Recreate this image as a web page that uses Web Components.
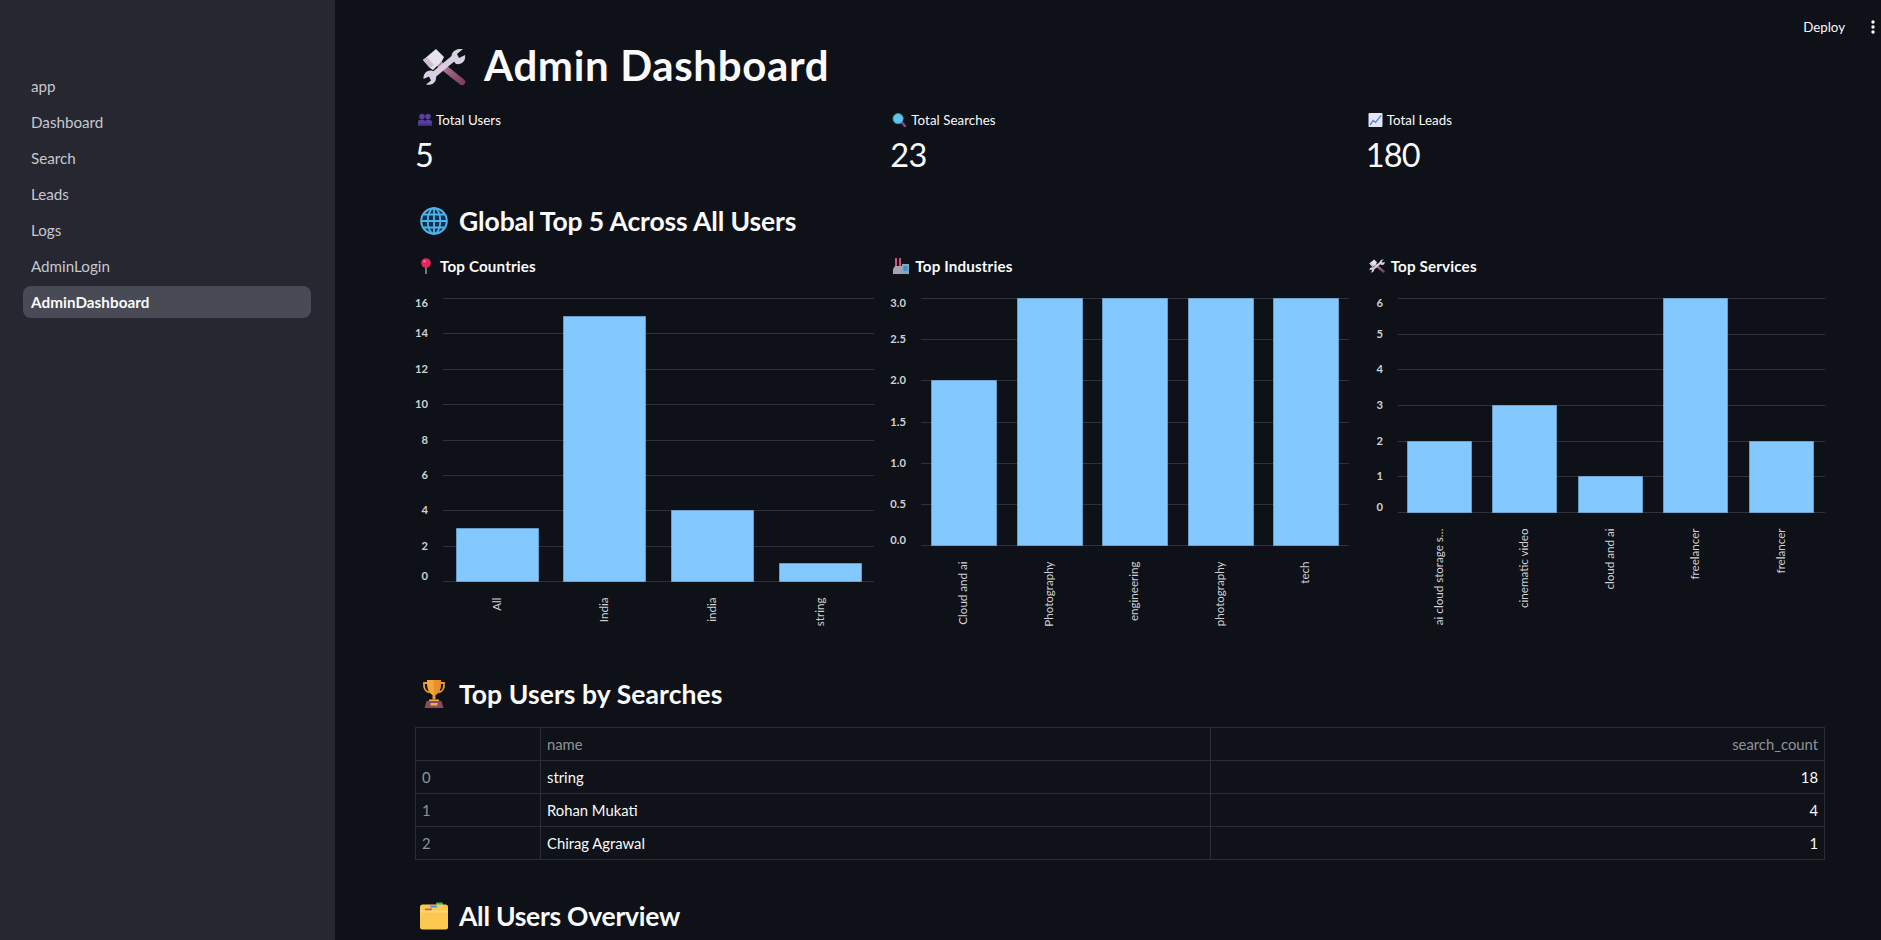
<!doctype html>
<html lang="en"><head><meta charset="utf-8"><title>Admin Dashboard</title>
<style>
html,body{margin:0;height:100%;background:#0e1117;color:#fafafa;font-family:Lato,"Noto Sans",sans-serif}
</style></head><body>
<admin-app>
  <side-nav slot="side">
    <nav-item>app</nav-item><nav-item>Dashboard</nav-item><nav-item>Search</nav-item><nav-item>Leads</nav-item><nav-item>Logs</nav-item><nav-item>AdminLogin</nav-item><nav-item active>AdminDashboard</nav-item>
  </side-nav>
  <top-bar slot="bar"></top-bar>
  <page-title icon="tools">Admin Dashboard</page-title>
  <metric-row>
    <metric-card icon="busts" iw="14" label="Total Users" value="5"></metric-card>
    <metric-card icon="glass" iw="15" label="Total Searches" value="23"></metric-card>
    <metric-card icon="trend" iw="15" label="Total Leads" value="180"></metric-card>
  </metric-row>
  <section-head icon="globe" style="margin-top:21px;letter-spacing:-.12px">Global Top 5 Across All Users</section-head>
  <metric-row style="margin-top:10px">
    <chart-card icon="pin" title="Top Countries" max="16" step="2" x0="28" x1="459" base="291.5"
      data='[["All",3],["India",15],["india",4],["string",1]]'></chart-card>
    <chart-card icon="factory" title="Top Industries" max="3" step="0.5" dec="1" x0="31" x1="458.7" base="255.5"
      data='[["Cloud and ai",2],["Photography",3],["engineering",3],["photography",3],["tech",3]]'></chart-card>
    <chart-card icon="tools" title="Top Services" max="6" step="1" x0="32" x1="459.3" base="222.5" nudge="-1"
      data='[["ai cloud storage s…",2],["cinematic video",3],["cloud and ai",1],["freelancer",6],["frelancer",2]]'></chart-card>
  </metric-row>
  <section-head icon="trophy" style="margin-top:34px;letter-spacing:.08px">Top Users by Searches</section-head>
  <data-table style="margin-top:13px"
    data='[["","name","search_count"],["0","string","18"],["1","Rohan Mukati","4"],["2","Chirag Agrawal","1"]]'></data-table>
  <section-head icon="folder" style="margin-top:36px;letter-spacing:-.27px">All Users Overview</section-head>
</admin-app>
<script>
const ICONS={
tools:`<svg viewBox="0 0 44 36"><defs><linearGradient id="hd" gradientUnits="userSpaceOnUse" x1="15" y1="13" x2="40" y2="33"><stop offset="0" stop-color="#b98ba2"/><stop offset="1" stop-color="#7d3f63"/></linearGradient></defs><path d="M15 13 40 33" stroke="url(#hd)" stroke-width="6.5" stroke-linecap="round" fill="none"/>
<path d="M1 11 14 0 22 8 20 12 11 21 8 19Z" fill="#e7e2ec"/><path d="M8 19 1 11 5 8 12 16Z" fill="#c9c1d2"/>
<path d="M9 28 33 8" stroke="#d8d0e2" stroke-width="6" fill="none"/>
<path d="M30 10C28 4 33-1 41 0L35 5 37 9 43 6C44 12 40 16 34 15Z" fill="#d8d0e2"/>
<path d="M14 27C15 33 10 37 4 35.5L9 31.500 7 27.500 1.500 30C1 25 5 20 11 22Z" fill="#d8d0e2"/></svg>`,
busts:`<svg viewBox="0 0 14 12"><g fill="#5a3f9c"><circle cx="4" cy="3" r="2.8"/><circle cx="10" cy="3" r="2.8"/><path d="M0 12V8.500C0 7 1.500 6 4 6S7 7 7 8.500V12ZM7 12V8.500C7 7 8 6 10 6S14 7 14 8.500V12Z"/></g><path d="M0 10h14v2H0z" fill="#4a3188"/></svg>`,
glass:`<svg viewBox="0 0 15 15"><path d="M8.500 8.500 13.500 14" stroke="#7a4a8a" stroke-width="2.600" stroke-linecap="round"/><circle cx="6" cy="6" r="5.500" fill="#5cc6ec"/><circle cx="6" cy="6" r="5.500" fill="none" stroke="#4a8fb6" stroke-width=".8"/></svg>`,
trend:`<svg viewBox="0 0 15 15"><rect width="15" height="15" rx="1" fill="#e5e4f1"/><path d="M1.500 13 5 8 7.500 10 13.500 2.500" stroke="#4a8ad8" stroke-width="1.500" fill="none"/></svg>`,
globe:`<svg viewBox="0 0 28 28" fill="none" stroke="#4db4ee" stroke-width="1.800"><circle cx="14" cy="14" r="12.800" fill="#123047" stroke-width="2"/><ellipse cx="14" cy="14" rx="6.300" ry="12.800"/><path d="M14 1v26M1.500 14h25M3.500 7.500h21M3.500 20.500h21"/></svg>`,
pin:`<svg viewBox="0 0 10 16"><path d="M5 8V16" stroke="#8b8f97" stroke-width="1.600"/><circle cx="5" cy="5" r="4.800" fill="#e6245f"/><circle cx="3.500" cy="3.300" r="1.200" fill="#f56f96"/></svg>`,
factory:`<svg viewBox="0 0 16 16"><rect x="2" y="0" width="2" height="9" fill="#d4517a"/><rect x="6" y="0" width="2" height="9" fill="#c85076"/><path d="M0 16V11L2 8H9V16Z" fill="#a8a2ad"/><rect x="9" y="6" width="7" height="10" fill="#7fa6c4"/><rect x="10.500" y="8" width="4" height="5" fill="#4f8cc2"/></svg>`,
trophy:`<svg viewBox="0 0 23 28"><path d="M5 3H1.500C1 8 3 12 7 12.500M18 3h3.500C22 8 20 12 16 12.500" fill="none" stroke="#e89d30" stroke-width="1.800"/><path d="M4.500 0H18.500C19 8 17 14 11.500 15.500 6 14 4 8 4.500 0Z" fill="#f4a83a"/><path d="M11 0h7.500C19 8 17 14 11.500 15.500Z" fill="#eb8f2e"/><path d="M10 15h3v4.500h-3Z" fill="#e39a2f"/><path d="M6.500 19.500h10V21h-10Z" fill="#f0b040"/><path d="M4 21H19L21 28H2Z" fill="#8a4a60"/><rect x="8" y="23" width="7" height="2.600" fill="#eaae42"/></svg>`,
folder:`<svg viewBox="0 0 28 27"><rect x="16" y="0" width="7" height="4" rx="1" fill="#3cb46e"/><rect x="0" y="2" width="28" height="25" rx="2.500" fill="#fdc84f"/><rect x="10" y="3" width="7" height="2" fill="#4a9ad6"/><rect x="5" y="6" width="7" height="2" fill="#ee4a5a"/><path d="M0 8h28v2H0z" fill="#ffd97a"/></svg>`
};
function def(name,css,render){customElements.define(name,class extends HTMLElement{connectedCallback(){if(this.shadowRoot)return;const r=this.attachShadow({mode:'open'});r.innerHTML=`<style>${css}</style>`+render(this)}})}
const ico=(n,w,h)=>`<emoji-icon name="${n}" style="width:${w}px;height:${h}px"></emoji-icon>`;

def('emoji-icon',':host{display:inline-block;flex:none;line-height:0}svg{width:100%;height:100%;display:block}',e=>ICONS[e.getAttribute('name')]);

def('admin-app',`:host{display:flex;height:100vh;overflow:hidden;position:relative}
main{flex:1;min-width:0;padding:39px 56px 0 80px;overflow:hidden}`,
()=>`<slot name="side"></slot><main><slot name="bar"></slot><slot></slot></main>`);

def('side-nav',':host{display:flex;flex-direction:column;gap:4px;flex:none;box-sizing:border-box;width:335px;background:#262730;padding:70px 24px 0 23px}',()=>'<slot></slot>');

def('nav-item',`:host{display:flex;align-items:center;height:32px;border-radius:8px;padding-left:8px;font-size:15.2px;color:#c6c8ce}
:host([active]){background:#484a55;color:#fafafa;font-weight:700;letter-spacing:.08px}`,()=>'<slot></slot>');

def('top-bar',`:host{position:absolute;top:0;right:0;height:54px;display:flex;align-items:center;padding-right:6px;gap:26px;font-size:13.300px;color:#fafafa}
svg{width:4px;height:14px;display:block;margin-top:-1px}`,
()=>`<span>Deploy</span><svg viewBox="0 0 4 14" fill="#fafafa"><circle cx="2" cy="2" r="1.700"/><circle cx="2" cy="7" r="1.700"/><circle cx="2" cy="12" r="1.700"/></svg>`);

def('page-title',`:host{display:flex;align-items:center;height:52px;padding-left:7px;box-sizing:border-box;gap:18px;font-size:42px;font-weight:700;letter-spacing:.65px;color:#fafafa}
emoji-icon{margin-top:4px}`,e=>ico(e.getAttribute('icon'),44,36)+'<slot></slot>');

def('metric-row',':host{display:grid;grid-template-columns:repeat(3,minmax(0,1fr));gap:16px;margin-top:18px}',()=>'<slot></slot>');

def('metric-card',`:host{display:block;height:71px}
.l{display:flex;align-items:center;gap:4px;height:21px;font-size:13.300px;color:#fafafa;letter-spacing:.06px}
.v{height:50px;line-height:50px;font-size:32.500px;letter-spacing:-.8px;color:#fafafa}`,
e=>{const w=+e.getAttribute('iw');return `<div class="l" style="padding-left:${e.getAttribute('icon')=='busts'?3:2}px">${ico(e.getAttribute('icon'),w,w-1)}<span>${e.getAttribute('label')}</span></div><div class="v">${e.getAttribute('value')}</div>`});

def('section-head',`:host{display:flex;align-items:center;height:40px;padding-left:5px;gap:11px;font-size:26.500px;font-weight:700;letter-spacing:-.2px;color:#fafafa}`,
e=>ico(e.getAttribute('icon'),28,28)+'<slot></slot>');

def('chart-card',`:host{display:block;height:389px}
.t{display:flex;align-items:center;gap:6px;height:30px;padding-left:3px;font-size:15.200px;font-weight:700;letter-spacing:.15px;color:#fafafa}
.t.pin{padding-left:6px;gap:9px}
svg.c{display:block;margin-top:9px;width:100%;height:350px;overflow:visible}
text{font-family:Lato,"Noto Sans",sans-serif;font-size:11.600px;fill:#cfd0d4}
text.y{font-weight:700;text-anchor:end;font-size:11.200px}
text.x{text-anchor:end}`,
e=>{
 const a=k=>e.getAttribute(k),icon=a('icon');
 const max=+a('max'),step=+a('step'),dec=+(a('dec')||0),x0=+a('x0'),x1=+a('x1'),base=+a('base'),top=8.5,nudge=+(a('nudge')||0);
 const data=JSON.parse(a('data'));
 const Y=v=>base-(v/max)*(base-top);
 let s='';
 const n=Math.round(max/step);
 for(let i=0;i<=n;i++){const v=i*step,y=Math.floor(Y(v))+.5;
  s+=`<line x1="${x0}" x2="${x1}" y1="${y}" y2="${y}" stroke="#2f3239"/>`;
  const ly=i==0?y-5:i==n?y+5:y;
  s+=`<text class="y" x="${x0-15}" y="${ly}" dy=".28em">${v.toFixed(dec)}</text>`;}
 const st=(x1-x0)/data.length,bw=st*.766;
 data.forEach(([l,v],i)=>{const bx=Math.round(x0+i*st+(st-bw)/2)+.5+nudge,by=Math.floor(Y(v))+.5,w=Math.round(bw)-1;
  s+=`<rect x="${bx}" y="${by}" width="${w}" height="${base-by}" fill="#83c9ff" stroke="#83c9ff" stroke-opacity=".5"/>`;
  const cx=bx+w/2,ly=base+16;
  s+=`<text class="x" transform="translate(${cx} ${ly}) rotate(-90)" dy=".27em">${l}</text>`;});
 const iw=icon=='pin'?10:16;
 return `<div class="t ${icon}">${ico(icon,iw,16)}<span>${a('title')}</span></div><svg class="c" viewBox="0 0 459.330 350">${s}</svg>`;
});

def('data-table',`:host{display:grid;grid-template-columns:125px 670px 1fr;border:solid #2b2e35;border-width:1px 1px 0 1px;background:#0f1218;font-size:14.800px}
div{box-sizing:border-box;height:33px;display:flex;align-items:center;padding:0 6px;border:solid #2b2e35;border-width:0 1px 1px 0;color:#fafafa}
div:nth-of-type(3n){justify-content:flex-end;border-right:0}
.h,.i{color:#8f9298}`,
e=>JSON.parse(e.getAttribute('data')).map((r,i)=>r.map((c,j)=>`<div class="${i==0?'h':j==0?'i':''}">${c}</div>`).join('')).join(''));
</script>
</body></html>
